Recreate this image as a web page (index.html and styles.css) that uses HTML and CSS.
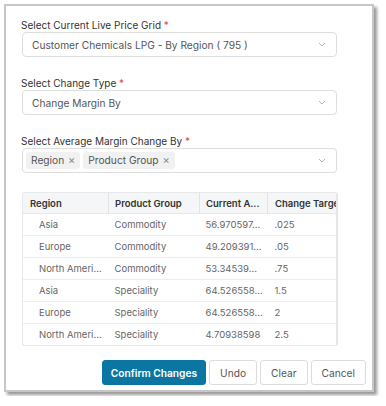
FILE: index.html
```html
<!DOCTYPE html>
<html lang="en">
<head>
    <meta charset="UTF-8">
    <meta name="viewport" content="width=device-width, initial-scale=1.0">
    <title>Change Margin</title>
    <link rel="stylesheet" href="styles.css">
</head>
<body>
    <div class="dialog">
        <div class="form-group">
            <label>Select Current Live Price Grid <span class="req">*</span></label>
            <div class="select">
                <span class="value">Customer Chemicals LPG - By Region ( 795 )</span>
                <svg class="chevron" width="8" height="5" viewBox="0 0 8 5"><path d="M1 1l3 3 3-3" fill="none" stroke="#b5b5b5" stroke-width="1"/></svg>
            </div>
        </div>
        <div class="form-group">
            <label>Select Change Type <span class="req">*</span></label>
            <div class="select">
                <span class="value">Change Margin By</span>
                <svg class="chevron" width="8" height="5" viewBox="0 0 8 5"><path d="M1 1l3 3 3-3" fill="none" stroke="#b5b5b5" stroke-width="1"/></svg>
            </div>
        </div>
        <div class="form-group">
            <label>Select Average Margin Change By <span class="req">*</span></label>
            <div class="select multi">
                <div class="tags">
                    <span class="tag">Region <span class="x">&times;</span></span>
                    <span class="tag">Product Group <span class="x">&times;</span></span>
                </div>
                <svg class="chevron" width="8" height="5" viewBox="0 0 8 5"><path d="M1 1l3 3 3-3" fill="none" stroke="#b5b5b5" stroke-width="1"/></svg>
            </div>
        </div>

        <div class="grid">
            <table>
                <thead>
                    <tr>
                        <th class="c1">Region</th>
                        <th class="c2">Product Group</th>
                        <th class="c3">Current A...</th>
                        <th class="c4">Change Target</th>
                    </tr>
                </thead>
                <tbody>
                    <tr><td class="c1">Asia</td><td>Commodity</td><td>56.970597...</td><td>.025</td></tr>
                    <tr><td class="c1">Europe</td><td>Commodity</td><td>49.209391...</td><td>.05</td></tr>
                    <tr><td class="c1">North Ameri...</td><td>Commodity</td><td>53.34539...</td><td>.75</td></tr>
                    <tr><td class="c1">Asia</td><td>Speciality</td><td>64.526558...</td><td>1.5</td></tr>
                    <tr><td class="c1">Europe</td><td>Speciality</td><td>64.526558...</td><td>2</td></tr>
                    <tr><td class="c1">North Ameri...</td><td>Speciality</td><td>4.70938598</td><td>2.5</td></tr>
                </tbody>
            </table>
        </div>

        <div class="actions">
            <button class="btn primary">Confirm Changes</button>
            <button class="btn">Undo</button>
            <button class="btn">Clear</button>
            <button class="btn">Cancel</button>
        </div>
    </div>
</body>
</html>
```

FILE: styles.css
```css
body {
    margin: 0;
    padding: 4px;
    background: #fff;
    font-family: Inter, "Noto Sans", sans-serif;
    color: #333;
}
.dialog {
    box-sizing: border-box;
    width: 370px;
    height: 388px;
    border: 2px solid #c6c6c6;
    box-shadow: 3px 3px 3px rgba(0, 0, 0, 0.4);
    background: #fff;
    padding: 12px 35px 0 15px;
}
.form-group {
    margin-bottom: 19px;
}
.form-group label {
    display: block;
    font-size: 10px;
    line-height: 14px;
    color: #333;
}
.req {
    color: #e8414e;
}
.select {
    box-sizing: border-box;
    height: 25px;
    margin-left: 1px;
    border: 1px solid #dedede;
    border-radius: 4px;
    display: flex;
    align-items: center;
    justify-content: space-between;
    padding: 0 10px 0 9px;
}
.select .value {
    font-size: 10.2px;
    color: #555;
}
.select.multi {
    padding-left: 3px;
}
.tags {
    display: flex;
    gap: 3px;
}
.tag {
    background: #f1f1f1;
    border-radius: 3px;
    font-size: 10.2px;
    color: #555;
    line-height: 17px;
    padding: 0 5px;
}
.tag .x {
    font-size: 11px;
    color: #888;
    margin-left: 1px;
}
.grid {
    margin: 17px 0 0 1px;
    width: 316px;
    overflow: hidden;
    border: 1px solid #e6e8ea;
    border-right: 2px solid #e4e6e8;
    border-radius: 3px;
    box-sizing: border-box;
}
table {
    border-collapse: collapse;
    table-layout: fixed;
    width: 345px;
    font-size: 9.5px;
}
th {
    background: #f5f6f7;
    font-weight: 600;
    color: #333;
    text-align: left;
    height: 20px;
    padding: 0 6px;
    border-right: 1px solid #e2e3e5;
    border-bottom: 1px solid #e6e8ea;
    white-space: nowrap;
    overflow: hidden;
}
td {
    height: 21px;
    padding: 0 6px;
    color: #666;
    border-bottom: 1px solid #ececec;
    white-space: nowrap;
    overflow: hidden;
}
tbody tr:last-child td {
    border-bottom: none;
}
th.c1 { width: 72px; padding-left: 7px; }
th.c2 { width: 78px; }
th.c3 { width: 55px; }
th.c4 { width: 90px; padding-left: 7px; }
td.c1 { padding-left: 16px; }
td:nth-child(4) { padding-left: 7px; }
.actions {
    display: flex;
    justify-content: flex-end;
    gap: 3px;
    margin: 14px -29px 0 0;
}
.btn {
    box-sizing: border-box;
    height: 25px;
    font-family: Inter, "Noto Sans", sans-serif;
    font-size: 10.2px;
    color: #555;
    background: #fff;
    border: 1px solid #dcdcdc;
    border-radius: 3px;
    padding: 0 10px;
}
.btn.primary {
    background: #0b76a1;
    border-color: #0b76a1;
    color: #fff;
    font-weight: 600;
    padding: 0 8px;
}
```
